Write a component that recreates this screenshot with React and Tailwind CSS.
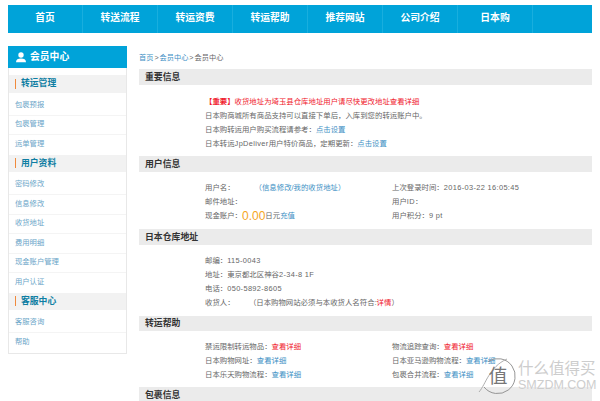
const NAV = ["首页", "转送流程", "转运资费", "转运帮助", "推荐网站", "公司介绍", "日本购"];

const SIDE = [
  { title: "转运管理", items: ["包裹预报", "包裹管理", "运单管理"] },
  { title: "用户资料", items: ["密码修改", "信息修改", "收货地址", "费用明细", "现金账户管理", "用户认证"] },
  { title: "客服中心", items: ["客服咨询", "帮助"] },
];

function Blue({ children }) {
  return <span className="text-[#3d8fc4]">{children}</span>;
}

function Red({ children }) {
  return <span className="text-[#f0202c]">{children}</span>;
}

function Lat({ children }) {
  return <span className="tracking-[0.36px]">{children}</span>;
}

function Head({ h = "h-[16px]", children }) {
  return (
    <div className={`flex ${h} items-center bg-[#ebebeb] pl-[6px] text-[8.9px] leading-none font-bold text-[#333]`}>
      {children}
    </div>
  );
}

function Sidebar() {
  return (
    <aside className="w-[118.5px] shrink-0 border border-t-0 border-[#e8e8e8]">
      <div className="-mx-px flex h-[22px] items-center gap-[4px] bg-[#00a3d9] pl-[8px] text-[9.8px] font-bold text-white">
        <svg width="10" height="11" viewBox="0 0 10 11" fill="white">
          <circle cx="5" cy="3" r="2.7" />
          <path d="M0 10.2c0-2.8 2-3.8 5-3.8s5 1 5 3.8z" />
        </svg>
        <span>会员中心</span>
      </div>
      <div className="pt-[7px]">
        {SIDE.map((s) => (
          <div key={s.title}>
            <div className="flex h-[17.5px] items-center bg-[#f2f2f2] pl-[6px] text-[8.8px] font-bold text-[#0e7ea3]">
              <span className="mr-[5px] h-[10px] w-px bg-[#f08a3c]" />
              {s.title}
            </div>
            <div className="mt-[3.5px]">
              {s.items.map((t, j) => (
                <div
                  key={t}
                  className={`flex h-[19.5px] items-center pl-[6px] text-[7.3px] text-[#6aa5c8] ${
                    j < s.items.length - 1 ? "border-b border-[#f4f4f4]" : ""
                  }`}
                >
                  {t}
                </div>
              ))}
            </div>
          </div>
        ))}
      </div>
    </aside>
  );
}

function Rows({ rows, pt = "pt-[9px]", pb = "pb-[5px]" }) {
  return (
    <div className={`pl-[66px] ${pt} ${pb}`}>
      {rows.map((r, i) => (
        <div key={i} className="flex h-[14px] items-center whitespace-nowrap">
          <div className={r[1] ? "w-[187px] shrink-0" : ""}>{r[0]}</div>
          {r[1] && <div>{r[1]}</div>}
        </div>
      ))}
    </div>
  );
}

function Watermark() {
  return (
    <div className="absolute top-[356px] left-[477px] flex items-center gap-[1px] text-[#cdcdcd] [text-shadow:0_0_1px_#ffffff]">
      <svg width="40" height="40" viewBox="0 0 40 40" fill="none" stroke="#8a8a8a" strokeWidth="0.9">
        <path d="M11 5.5A17.5 17.5 0 1 1 7 31" />
        <path d="M2 36C9 28 12 11 30 3" stroke="#a5a5a5" />
        <text x="21" y="27" textAnchor="middle" fontSize="19" fill="#777" stroke="none">值</text>
      </svg>
      <div className="flex flex-col">
        <span className="text-[15.5px] leading-[18px]">什么值得买</span>
        <span className="text-[12.5px] leading-[14px]">SMZDM.COM</span>
      </div>
    </div>
  );
}

export default function App() {
  return (
    <div
      className="relative h-[401px] w-[600px] overflow-hidden bg-white text-[7.4px] text-[#666]"
      style={{ fontFamily: '"Liberation Sans", "Noto Sans CJK SC", sans-serif' }}
    >
      <nav className="mx-[8px] mt-[5px] flex h-[27.5px] bg-[#00a3d9] text-[9.8px] font-bold text-white">
        {NAV.map((n) => (
          <div key={n} className="flex w-[75px] items-center justify-center border-r border-[#19aede]">
            {n}
          </div>
        ))}
      </nav>

      <div className="mx-[8px] mt-[13.5px] flex items-start gap-[12.5px]">
        <Sidebar />
        <main className="min-w-0 flex-1">
          <div className="flex h-[23px] items-center gap-px pt-[1px] text-[7.2px]">
            <Blue>首页</Blue>
            <span>&gt;</span>
            <Blue>会员中心</Blue>
            <span>&gt;</span>
            <span>会员中心</span>
          </div>
          <Head>重要信息</Head>
          <Rows
            pt="pt-[10px]"
            rows={[
              [<span className="text-[#f0202c]"><b>【重要】</b>收货地址为埼玉县仓库地址用户请尽快更改地址查看详细</span>],
              ["日本购商城所有商品支持可以直接下单后，入库到您的转运账户中。"],
              [<span>日本购转运用户购买流程请参考：<Blue>点击设置</Blue></span>],
              [<span>日本转运<Lat>JpDeliver</Lat>用户特价商品，定期更新：<Blue>点击设置</Blue></span>],
            ]}
          />
          <Head>用户信息</Head>
          <Rows
            pb="pb-[6px]"
            rows={[
              [
                <span className="flex">用户名：<span className="ml-[20px]"><Blue>（信息修改/我的收货地址）</Blue></span></span>,
                <span>上次登录时间：<Lat>2016-03-22 16:05:45</Lat></span>,
              ],
              ["邮件地址：", <span>用户<Lat>ID</Lat>：</span>],
              [
                <span className="flex items-center">现金账户：<span className="text-[12px] leading-none text-[#f5a623]">0.00</span>日元<Blue>充值</Blue></span>,
                <span>用户积分：<Lat>9 pt</Lat></span>,
              ],
            ]}
          />
          <Head>日本仓库地址</Head>
          <Rows
            pb="pb-[6px]"
            rows={[
              [<span>邮编：<Lat>115-0043</Lat></span>],
              [<span>地址：東京都北区神谷<Lat>2-34-8 1F</Lat></span>],
              [<span>电话：<Lat>050-5892-8605</Lat></span>],
              [<span>收货人：<span className="ml-[18px]">（日本购物网站必须与本收货人名符合:<Red>详情</Red>）</span></span>],
            ]}
          />
          <Head h="h-[15px]">转运帮助</Head>
          <Rows
            rows={[
              [<span>禁运限制转运物品：<Red>查看详细</Red></span>, <span>物流追踪查询：<Red>查看详细</Red></span>],
              [<span>日本购物网址：<Blue>查看详细</Blue></span>, <span>日本亚马逊购物流程：<Blue>查看详细</Blue></span>],
              [<span>日本乐天购物流程：<Blue>查看详细</Blue></span>, <span>包裹合并流程：<Blue>查看详细</Blue></span>],
            ]}
          />
          <Head>包裹信息</Head>
        </main>
      </div>
      <Watermark />
    </div>
  );
}
